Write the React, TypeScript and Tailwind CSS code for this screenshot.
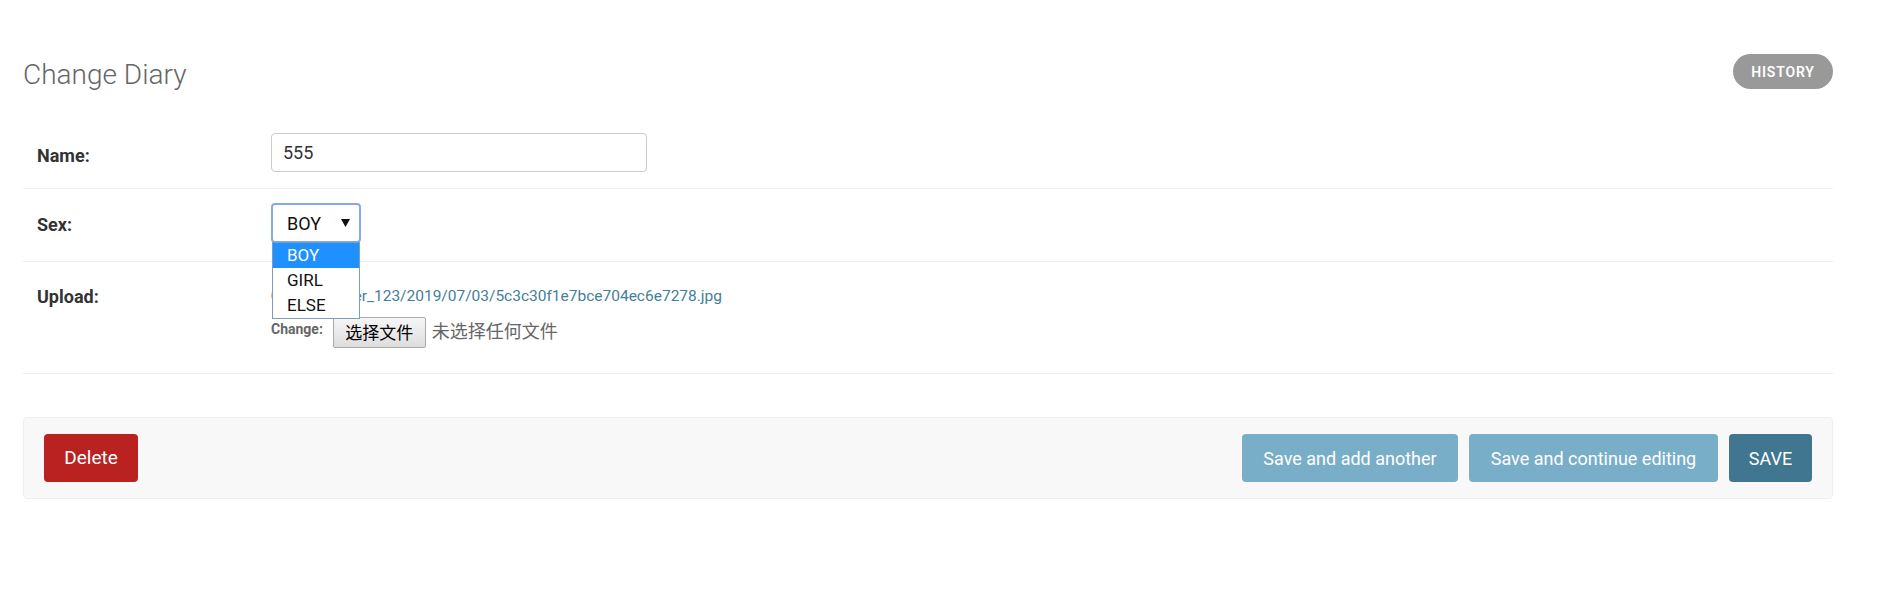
import { useState } from "react"

const options = ["BOY", "GIRL", "ELSE"]

function Row({ label, labelPad, rowPad, children }: { label: string, labelPad: string, rowPad: string, children: React.ReactNode }) {
    return (
        <div className={`flex border-b border-[#eee] ${rowPad}`}>
            <div className={`w-[248px] shrink-0 pl-[14px] ${labelPad}`}>
                <label className="text-[18px] leading-[20px] font-bold text-[#333]">{label}</label>
            </div>
            <div className="flex-1">
                {children}
            </div>
        </div>
    )
}

export default function App() {
    const [name, setName] = useState("555")
    const [sex] = useState("BOY")

    return (
        <div className="min-h-screen bg-white pt-[54px] pl-[23px] pr-[55px] font-['Roboto','Noto_Sans_CJK_SC',sans-serif]">
            {/* header */}
            <div className="flex justify-between items-start h-[35px] mb-[29px]">
                <h1 className="mt-[4px] text-[28px] leading-[34px] font-light text-[#666]">
                    Change Diary
                </h1>
                <a className="flex items-center justify-center w-[100px] h-[35px] pt-[1px] rounded-full bg-[#999] text-white text-[14px] font-semibold tracking-[0.8px] uppercase">
                    History
                </a>
            </div>

            {/* fields */}
            <Row label="Name:" labelPad="pt-[12px]" rowPad="pt-[15px] pb-[16px]">
                <input
                    name="name"
                    type="text"
                    value={name}
                    onChange={(event) => setName(event.currentTarget.value)}
                    className="w-[376px] h-[39px] rounded-[4px] border border-[#ccc] pl-[11px] text-[18px] text-[#333] outline-none"
                />
            </Row>

            <Row label="Sex:" labelPad="pt-[11px]" rowPad="pt-[14px] pb-[18px]">
                <div className="relative w-[90px]">
                    <div className="flex items-center justify-between h-[40px] rounded-[4px] border-2 border-[#86a9ec] pl-[14px] pr-[9px] text-[18px] text-[#111]">
                        <span>{sex}</span>
                        <svg width="9" height="8" viewBox="0 0 9 8">
                            <polygon points="0,0 9,0 4.5,8" fill="#111" />
                        </svg>
                    </div>
                    {/* open native list */}
                    <div className="absolute left-[1px] top-[39px] z-10 w-[88px] border border-[#7f9db9] bg-white text-[17px] leading-[25px]">
                        {options.map((o) =>
                            <div key={o} className={o === sex ? "pl-[14px] bg-[#1e90ff] text-white" : "pl-[14px] text-[#111]"}>
                                {o}
                            </div>
                        )}
                    </div>
                </div>
            </Row>

            <Row label="Upload:" labelPad="pt-[24px]" rowPad="pt-0 pb-[25px]">
                <div className="pt-[25px]">
                    <div className="flex items-baseline h-[19px] leading-[19px]">
                        <span className="text-[14px] font-bold text-[#666]">Currently:</span>
                        <a className="ml-[4px] text-[15.5px] text-[#447e9b]">user_123/2019/07/03/5c3c30f1e7bce704ec6e7278.jpg</a>
                    </div>
                    <div className="flex items-start mt-[11px]">
                        <span className="mt-[5px] text-[14px] leading-[14px] font-bold text-[#666]">Change:</span>
                        <button className="ml-[10px] w-[93px] h-[31px] rounded-[2px] border border-[#a9a9a9] bg-gradient-to-b from-[#f6f6f6] to-[#dddddd] text-[17px] leading-[20px] text-black">
                            选择文件
                        </button>
                        <span className="ml-[6px] mt-[5px] text-[18px] leading-[20px] text-[#666]">未选择任何文件</span>
                    </div>
                </div>
            </Row>

            {/* submit row */}
            <div className="mt-[43px] flex justify-between items-center h-[82px] rounded-[4px] border border-[#eee] bg-[#f8f8f8] pl-[20px] pr-[20px]">
                <a className="flex items-center justify-center w-[94px] h-[48px] rounded-[4px] bg-[#ba2121] text-white text-[19px]">
                    Delete
                </a>
                <div className="flex gap-[11px]">
                    <button className="w-[216px] h-[48px] rounded-[4px] bg-[#79aec8] text-white text-[18px]">
                        Save and add another
                    </button>
                    <button className="w-[249px] h-[48px] rounded-[4px] bg-[#79aec8] text-white text-[18px]">
                        Save and continue editing
                    </button>
                    <button className="w-[83px] h-[48px] rounded-[4px] bg-[#417690] text-white text-[18px]">
                        SAVE
                    </button>
                </div>
            </div>
        </div>
    )
}
